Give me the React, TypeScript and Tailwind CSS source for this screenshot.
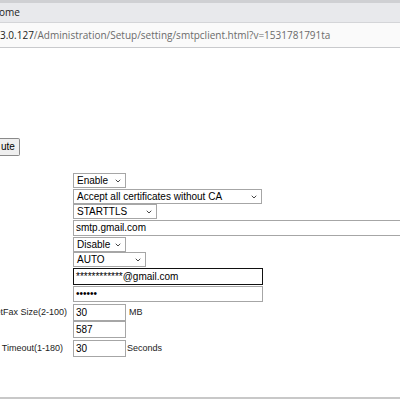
import { ChevronDown } from "lucide-react"

const ui = { fontFamily: '"Liberation Sans", Arial, sans-serif' }
const chrome = { fontFamily: '"Open Sans", "Noto Sans", sans-serif' }

function Select({ value, w, mt }: { value: string; w: string; mt: string }) {
  return (
    <div
      className={`${w} ${mt} h-[15px] flex items-center justify-between border border-[#a6a6a6] bg-white pl-[3px] pr-[3px] text-[10px] leading-none text-black whitespace-nowrap`}
    >
      <span>{value}</span>
      <ChevronDown className="w-[8px] h-[8px] shrink-0 text-[#222]" strokeWidth={2.5} />
    </div>
  )
}

function Field({ value, w, mt, h = "h-[16px]", focus }: { value: string; w: string; mt: string; h?: string; focus?: boolean }) {
  return (
    <div
      className={`${w} ${mt} ${h} shrink-0 flex items-center ${focus ? "border-[1.5px] border-[#111]" : "border border-[#a6a6a6]"} bg-white pl-[2px] text-[10px] leading-none text-black whitespace-nowrap overflow-hidden`}
    >
      {value}
    </div>
  )
}

export default function App() {
  return (
    <div className="w-[400px] h-[400px] bg-white overflow-hidden flex flex-col" style={ui}>
      {/* browser chrome */}
      <div className="h-[3px] bg-[#cfd0d3]" />
      <div className="h-[20px] bg-[#e8e9ec] border-b border-[#d4d5d8] flex items-center text-[10px] text-[#222]" style={chrome}>
        <span className="-ml-[1px]">ome</span>
      </div>
      <div className="h-[25px] bg-[#fafafa] border-b border-[#c9cacd] flex items-center text-[10px] whitespace-nowrap" style={chrome}>
        <span className="text-[#222]">3.0.127</span>
        <span className="text-[#6b6b6b]">/Administration/Setup/setting/smtpclient.html?v=1531781791ta</span>
      </div>

      {/* page */}
      <div className="flex-1 flex flex-col text-[9px] text-[#222]">
        <button className="mt-[90px] w-[20px] h-[18px] border border-l-0 border-[#8a8a8a] bg-[#efefef] rounded-r-[2px] text-[10px] text-black leading-none flex items-center justify-start pl-[1px]">
          ute
        </button>

        <div className="flex flex-col items-start pl-[73px]">
          <Select value="Enable" w="w-[53px]" mt="mt-[17px]" />
          <Select value="Accept all certificates without CA" w="w-[189px]" mt="mt-[1px]" />
          <Select value="STARTTLS" w="w-[84px]" mt="mt-0" />
          <Field value="smtp.gmail.com" w="w-[340px]" mt="mt-[1px]" />
          <Select value="Disable" w="w-[53px]" mt="mt-[1px]" />
          <Select value="AUTO" w="w-[73px]" mt="mt-0" />
          <Field value="************@gmail.com" w="w-[190px]" mt="mt-[1px]" h="h-[17px]" focus />
          <Field value="••••••" w="w-[190px]" mt="mt-[1px]" />
        </div>

        <div className="flex items-center mt-[2px] h-[17px]">
          <div className="w-[73px] shrink-0 flex justify-end overflow-hidden pr-[6px]">
            <span className="whitespace-nowrap">etFax Size(2-100)</span>
          </div>
          <Field value="30" w="w-[53px]" mt="mt-0" h="h-[17px]" />
          <span className="ml-[3px]">MB</span>
        </div>
        <div className="flex items-center mt-0 h-[17px] pl-[73px]">
          <Field value="587" w="w-[53px]" mt="mt-0" h="h-[17px]" />
        </div>
        <div className="flex items-center mt-[2px] h-[17px]">
          <div className="w-[73px] shrink-0 flex justify-end overflow-hidden pr-[10px]">
            <span className="whitespace-nowrap">Timeout(1-180)</span>
          </div>
          <Field value="30" w="w-[53px]" mt="mt-0" h="h-[17px]" />
          <span className="ml-[1px]">Seconds</span>
        </div>

        <div className="flex-1" />
        <div className="h-[2px] bg-[#c8c8c8] mb-[1px]" />
      </div>
    </div>
  )
}
